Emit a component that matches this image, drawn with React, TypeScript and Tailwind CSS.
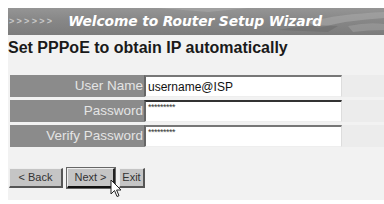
import React from "react";

const arial = { fontFamily: '"Liberation Sans", Arial, sans-serif' };

function Row({ label, value, pw, dark }: { label: string; value: string; pw?: boolean; dark?: boolean }) {
  return (
    <div className="flex h-[22px]">
      <div className="w-[134px] bg-[#8b8b8b] flex items-center justify-end pr-[1px] text-[13.5px] text-[#e4e4e4] leading-none">
        {label}
      </div>
      <div className="flex-1 flex bg-[#ececec]">
        <div
          className={`w-[198px] h-[22px] bg-white border-t-2 border-l-2 border-r border-b ${dark ? "border-t-[#333]" : "border-t-[#777]"} border-l-[#666] border-r-[#ddd] border-b-[#eee] flex ${pw ? "items-start pt-[1px] text-[9px] tracking-[-0.5px] text-[#333]" : "items-center text-[12px] text-[#111]"} pl-[2px] leading-none`}
        >
          {pw ? "*********" : value}
        </div>
      </div>
    </div>
  );
}

function Btn({ children, w, focus }: { children: React.ReactNode; w: string; focus?: boolean }) {
  return (
    <div
      className={`${w} h-[20px] bg-[#c5c5c5] flex items-center justify-center text-[11px] text-[#333] border-t border-l border-t-[#eee] border-l-[#eee] border-r-2 border-b-2 ${focus ? "border-r-[#222] border-b-[#111] outline outline-1 outline-[#666]" : "border-r-[#555] border-b-[#555]"}`}
    >
      {children}
    </div>
  );
}

export default function App() {
  return (
    <div className="w-[384px] h-[204px] bg-white pt-[8px] pl-[8px] overflow-hidden" style={arial}>
      <div className="bg-[#f2f2f2] h-[192px] flex flex-col relative">
        <div className="relative h-[27px] bg-[linear-gradient(180deg,#959595_0%,#878787_45%,#7c7c7c_100%)] flex items-center overflow-hidden">
          <svg className="absolute inset-0" width="376" height="27" viewBox="0 0 376 27">
            <path d="M150 0 L240 0 L200 4 Z" fill="#a8a8a8" opacity="0.6" />
            <path d="M300 14 Q330 6 376 4 L376 10 Q340 12 310 20 Z" fill="#a4a4a4" opacity="0.7" />
            <path d="M270 22 Q300 16 330 18 L320 24 Z" fill="#6c6c6c" opacity="0.6" />
            <path d="M340 18 Q360 14 376 16 L376 22 Q360 22 345 24 Z" fill="#9e9e9e" opacity="0.6" />
          </svg>
          <span className="relative ml-[1px] text-[9px] text-[#c9c9c9] tracking-[2.3px] leading-none font-bold">&gt;&gt;&gt;&gt;&gt;&gt;</span>
          <span
            className="relative ml-[14px] text-[13.8px] italic font-bold text-white leading-none tracking-[-0.1px]"
            style={{ fontFamily: '"DejaVu Sans", Verdana, sans-serif' }}
          >
            Welcome to Router Setup Wizard
          </span>
        </div>
        <div className="mt-[5px] text-[16px] font-bold text-[#1a1a1a] leading-none h-[16px]">
          Set PPPoE to obtain IP automatically
        </div>
        <div className="mt-[19px] ml-[2px] flex flex-col gap-[3px]">
          <Row label="User Name" value="username@ISP" />
          <Row label="Password" value="" pw dark />
          <Row label="Verify Password" value="" pw />
        </div>
        <div className="mt-[21px] ml-[1px] flex gap-[4px]">
          <Btn w="w-[54px]">&lt; Back</Btn>
          <Btn w="w-[48px]" focus>Next &gt;</Btn>
          <Btn w="w-[26px]">Exit</Btn>
        </div>
        <svg className="absolute left-[102px] top-[171px]" width="13" height="20" viewBox="0 0 13 20">
          <path d="M1 1 L1 15 L4.5 11.5 L7 17.5 L9 16.7 L6.6 11 L11 11 Z" fill="#fff" stroke="#222" strokeWidth="1" strokeLinejoin="round" />
        </svg>
      </div>
    </div>
  );
}
